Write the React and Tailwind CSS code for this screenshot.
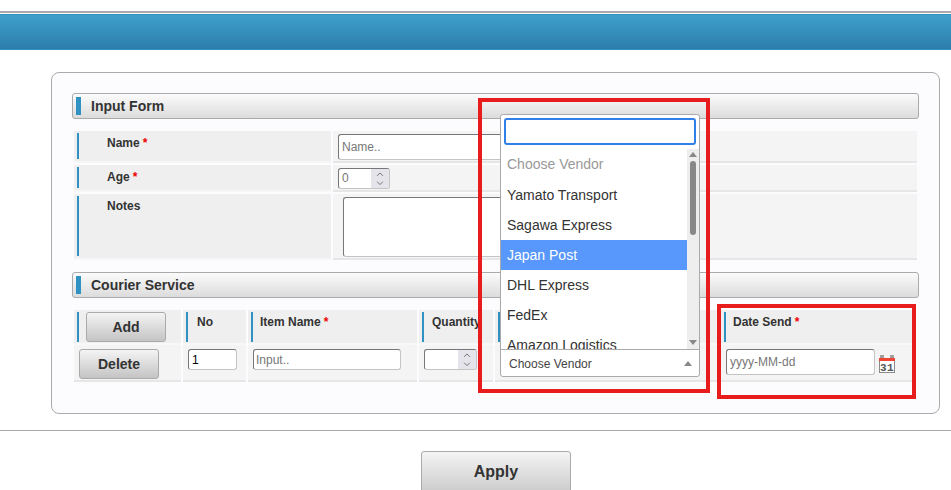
import { ChevronUp, ChevronDown } from "lucide-react";

const vendors = [
  "Yamato Transport",
  "Sagawa Express",
  "Japan Post",
  "DHL Express",
  "FedEx",
  "Amazon Logistics",
];

const fieldBorder = "rounded-[3px] border border-t-[#777777] border-l-[#777777] border-r-[#c4c4c4] border-b-[#c4c4c4]";

function SectionHeader({ title }) {
  return (
    <div className="flex h-[26px] w-[847px] items-center rounded-[3px] border border-[#aaaaaa] bg-gradient-to-b from-[#fbfbfb] to-[#dcdcdc] pl-[3px]">
      <span className="h-[18px] w-[5px] bg-[#3092c3]" />
      <h2 className="ml-[10px] text-[14px] font-bold text-[#333333]">{title}</h2>
    </div>
  );
}

function Required() {
  return <span className="ml-[3px] text-[#ee0000]">*</span>;
}

function FormRow({ label, required, height, children }) {
  return (
    <div className="mb-[2px] flex gap-[2px]" style={{ height }}>
      <div className="flex w-[257px] border-b-2 border-[#f6f6f6] bg-[#efefef] py-[2px] pl-[3px]">
        <span className="w-[2px] bg-[#3092c3]" />
        <label className="ml-[28px] text-[12px] font-bold leading-[20px] text-[#333333]">
          {label}
          {required && <Required />}
        </label>
      </div>
      <div className="flex w-[584px] border-b-2 border-[#e6e6e6] bg-[#f4f4f4]">{children}</div>
    </div>
  );
}

function NumberBox({ width, value }) {
  return (
    <div
      className={`flex h-[21px] overflow-hidden bg-white ${fieldBorder}`}
      style={{ width }}
    >
      <span className="flex-1 pl-[3px] text-[12px] leading-[19px] text-[#777777]">{value}</span>
      <span className="flex w-[18px] flex-col items-center justify-center bg-[#e4e4ea] text-[#666666]">
        <ChevronUp size={12} strokeWidth={2} className="-mb-[1px]" />
        <ChevronDown size={12} strokeWidth={2} className="-mt-[1px]" />
      </span>
    </div>
  );
}

function HeadCell({ width, children }) {
  return (
    <div
      className="flex h-[35px] shrink-0 border-b-2 border-[#f8f8f8] bg-[#efefef] pb-[1px] pl-[3px] pt-[2px]"
      style={{ width }}
    >
      <span className="w-[2px] shrink-0 bg-[#3092c3]" />
      {children}
    </div>
  );
}

function HeadLabel({ children }) {
  return (
    <span className="ml-[7px] text-[12px] font-bold leading-[20px] text-[#333333]">{children}</span>
  );
}

function BodyCell({ width, children }) {
  return (
    <div
      className="flex h-[37px] shrink-0 border-b-2 border-[#e6e6e6] bg-[#f4f4f4] pt-[4px]"
      style={{ width }}
    >
      {children}
    </div>
  );
}

function GrayButton({ children, className }) {
  return (
    <button
      type="button"
      className={`rounded-[3px] border border-[#aaaaaa] bg-gradient-to-b from-[#f4f4f4] to-[#c4c4c4] font-bold text-[#333333] ${className}`}
    >
      {children}
    </button>
  );
}

function CalendarIcon() {
  return (
    <svg width="16" height="18" viewBox="0 0 16 18" className="ml-[4px] mt-[6px]">
      <rect x="0.5" y="4.5" width="15" height="13" fill="#ffffff" stroke="#8a8a8a" />
      <rect x="0" y="3" width="16" height="3" fill="#ee4433" />
      <rect x="1" y="0" width="4" height="3" fill="#a0a0a0" />
      <rect x="11" y="0" width="4" height="3" fill="#a0a0a0" />
      <text
        x="8"
        y="16"
        textAnchor="middle"
        fontSize="11"
        fontWeight="700"
        letterSpacing="0.5"
        fontFamily="Liberation Mono, monospace"
        fill="#555555"
      >
        31
      </text>
    </svg>
  );
}

function VendorPopup() {
  return (
    <div className="absolute left-[500px] top-[114px] flex h-[263px] w-[200px] flex-col rounded-[3px] border border-[#aaaaaa] bg-white">
      <div className="px-[3px] pb-[4px] pt-[3px]">
        <input className="block h-[27px] w-[192px] rounded-[3px] border-2 border-[#3080e8] bg-white outline-none" />
      </div>
      <div className="flex h-[200px] shrink-0 overflow-hidden">
        <ul className="w-[186px] text-[14px] text-[#333333]">
          <li className="h-[31px] pl-[6px] leading-[31px] text-[#999999]">Choose Vendor</li>
          {vendors.map((vendor) => (
            <li
              key={vendor}
              className={`h-[30px] pl-[6px] leading-[30px] ${
                vendor === "Japan Post" ? "bg-[#5897fb] text-white" : ""
              }`}
            >
              {vendor}
            </li>
          ))}
        </ul>
        <div className="flex w-[12px] flex-col items-center bg-[#eeeeee] pt-[3px]">
          <span className="h-0 w-0 border-x-[4px] border-b-[5px] border-x-transparent border-b-[#888888]" />
          <span className="mt-[4px] h-[74px] w-[6px] rounded-[3px] bg-[#888888]" />
          <span className="mt-[105px] h-0 w-0 border-x-[4px] border-t-[5px] border-x-transparent border-t-[#888888]" />
        </div>
      </div>
      <div className="flex flex-1 items-center justify-between border-t border-[#aaaaaa] pl-[8px] pr-[7px] pt-[1px]">
        <span className="text-[12px] text-[#444444]">Choose Vendor</span>
        <span className="-ml-[2px] h-0 w-0 border-x-[4px] border-b-[5px] border-x-transparent border-b-[#888888]" />
      </div>
    </div>
  );
}

export default function App() {
  return (
    <div className="relative h-[490px] w-[951px] overflow-hidden bg-white font-['Liberation_Sans',Arial,sans-serif]">
      {/* Top bar */}
      <div className="h-[11px]" />
      <div className="h-[2px] bg-[#aaaaaa]" />
      <div className="mt-[1px] h-[36px] border-y border-[#2f8fbd] bg-gradient-to-b from-[#40a0cb] to-[#2c7dab]" />

      {/* Panel */}
      <div className="ml-[51px] mt-[22px] h-[342px] w-[889px] rounded-[8px] border border-[#aaaaaa] bg-[#fcfcff] pl-[20px] pt-[20px]">
        <SectionHeader title="Input Form" />

        <div className="ml-[2px] mt-[12px] flex w-[843px] flex-col">
          <FormRow label="Name" required height={32}>
            <input
              placeholder="Name.."
              className={`ml-[5px] mt-[3px] h-[26px] w-[200px] bg-white pl-[3px] text-[12px] outline-none placeholder:text-[#777777] ${fieldBorder}`}
            />
          </FormRow>
          <FormRow label="Age" required height={27}>
            <div className="ml-[5px] mt-[3px]">
              <NumberBox width={52} value="0" />
            </div>
          </FormRow>
          <FormRow label="Notes" height={66}>
            <textarea className={`ml-[10px] mt-[3px] h-[60px] w-[300px] resize-none bg-white outline-none ${fieldBorder}`} />
          </FormRow>
        </div>

        <div className="mt-[10px]">
          <SectionHeader title="Courier Service" />
        </div>

        {/* Table */}
        <div className="ml-[2px] mt-[12px] flex w-[842px] gap-[2px]">
          <HeadCell width={107}>
            <GrayButton className="ml-[7px] h-[30px] w-[80px] text-[14px]">Add</GrayButton>
          </HeadCell>
          <HeadCell width={63}>
            <HeadLabel>
              <span className="ml-[2px]">No</span>
            </HeadLabel>
          </HeadCell>
          <HeadCell width={169}>
            <HeadLabel>
              Item Name
              <Required />
            </HeadLabel>
          </HeadCell>
          <HeadCell width={74}>
            <HeadLabel>
              <span className="ml-[1px]">Quantity</span>
            </HeadLabel>
          </HeadCell>
          <HeadCell width={224} />
          <HeadCell width={195}>
            <HeadLabel>
              Date Send
              <Required />
            </HeadLabel>
          </HeadCell>
        </div>
        <div className="ml-[2px] flex w-[842px] gap-[2px]">
          <BodyCell width={107}>
            <GrayButton className="ml-[5px] h-[30px] w-[80px] pt-[1px] text-[14px]">Delete</GrayButton>
          </BodyCell>
          <BodyCell width={63}>
            <input
              defaultValue="1"
              className={`ml-[5px] h-[21px] w-[49px] bg-white pl-[3px] text-[12px] text-black outline-none ${fieldBorder}`}
            />
          </BodyCell>
          <BodyCell width={169}>
            <input
              placeholder="Input.."
              className={`ml-[5px] h-[21px] w-[148px] bg-white pl-[2px] text-[12px] outline-none placeholder:text-[#777777] ${fieldBorder}`}
            />
          </BodyCell>
          <BodyCell width={74}>
            <div className="ml-[5px]">
              <NumberBox width={53} value="" />
            </div>
          </BodyCell>
          <BodyCell width={224} />
          <BodyCell width={195}>
            <input
              placeholder="yyyy-MM-dd"
              className={`ml-[5px] h-[26px] w-[149px] bg-white pl-[3px] text-[12px] outline-none placeholder:text-[#777777] ${fieldBorder}`}
            />
            <CalendarIcon />
          </BodyCell>
        </div>
      </div>

      <div className="mt-[16px] h-px bg-[#aaaaaa]" />
      <div className="ml-[421px] mt-[20px]">
        <GrayButton className="h-[50px] w-[150px] pb-[8px] text-[16px]">Apply</GrayButton>
      </div>

      {/* Annotations and open dropdown lying over the form */}
      <div className="absolute left-[478px] top-[98px] h-[295px] w-[232px] border-4 border-[#e81c1c]" />
      <div className="absolute left-[717px] top-[304px] h-[95px] w-[199px] border-4 border-[#e81c1c]" />
      <VendorPopup />
    </div>
  );
}
